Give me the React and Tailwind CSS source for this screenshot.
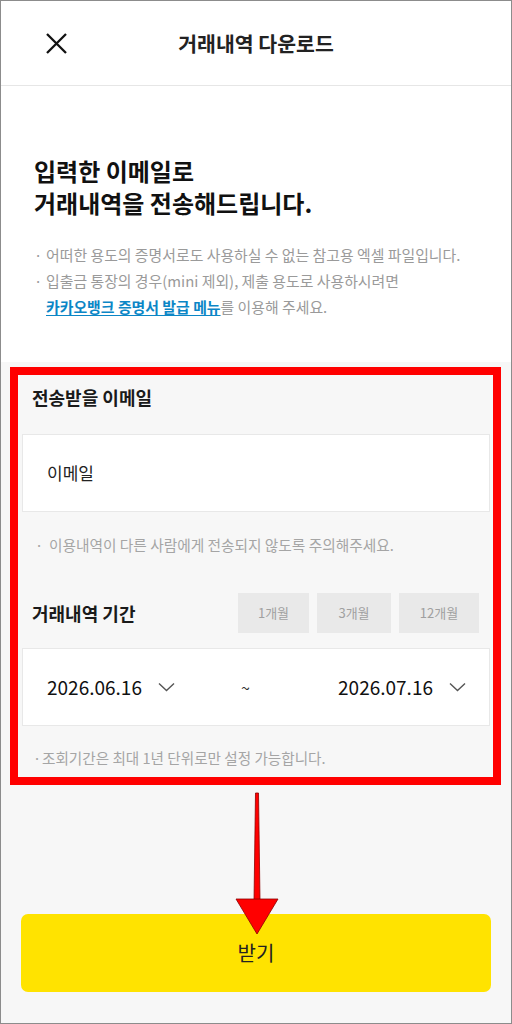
import React from "react";

const font = "font-['Noto_Sans_CJK_KR','Noto_Sans',sans-serif]";

function Chevron() {
  return (
    <svg width="17" height="10" viewBox="0 0 17 10" className="ml-[16px]">
      <path d="M1 1.5 L8.5 8.5 L16 1.5" fill="none" stroke="#555" strokeWidth="1.4" />
    </svg>
  );
}

export default function App() {
  const periods = [
    { label: "1개월", w: "w-[71px]" },
    { label: "3개월", w: "w-[74px]" },
    { label: "12개월", w: "w-[80px]" },
  ];

  return (
    <div className={`relative w-[512px] h-[1024px] border border-[#8c8c8c] bg-[#f7f7f7] flex flex-col overflow-hidden ${font}`}>
      {/* header */}
      <div className="h-[85px] shrink-0 bg-white border-b border-[#e6e6e6] grid grid-cols-[1fr_auto_1fr] items-center">
        <div className="pl-[45px]">
          <svg width="21" height="21" viewBox="0 0 21 21">
            <path d="M1 1 L20 20 M20 1 L1 20" stroke="#111" strokeWidth="2.3" />
          </svg>
        </div>
        <h1 className="text-[20.5px] font-bold text-[#222]">거래내역 다운로드</h1>
        <div />
      </div>

      {/* intro */}
      <div className="bg-white pt-[69px] pb-[42px] pl-[33px] pr-2">
        <h2 className="text-[24px] leading-[32px] font-bold text-[#111]">
          <span className="block">입력한 이메일로</span>
          <span className="block">거래내역을 전송해드립니다.</span>
        </h2>
        <ul className="mt-[23px] text-[14.9px] leading-[26px] text-[#9a9a9a]">
          <li className="flex">
            <span className="w-[12px] shrink-0">·</span>
            <span className="whitespace-nowrap">어떠한 용도의 증명서로도 사용하실 수 없는 참고용 엑셀 파일입니다.</span>
          </li>
          <li className="flex">
            <span className="w-[12px] shrink-0">·</span>
            <span>
              입출금 통장의 경우(mini 제외), 제출 용도로 사용하시려면
              <br />
              <a className="font-bold text-[#0b86c6] underline underline-offset-2">카카오뱅크 증명서 발급 메뉴</a>를 이용해 주세요.
            </span>
          </li>
        </ul>
      </div>

      {/* form (outlined) */}
      <div className="mt-[5px] ml-[9px] mr-[10px] border-[8px] border-[#ff0000] pt-[10px] pb-[9px] px-[4px]">
        <div className="px-[10px] text-[18px] leading-[24px] font-bold text-[#1a1a1a]">전송받을 이메일</div>
        <div className="mt-[25px] mr-[-1px] h-[78px] bg-white border border-[#e8e8e8] flex items-center pl-[24px] text-[17px] text-[#222]">
          이메일
        </div>
        <p className="mt-[23px] pl-[13px] flex text-[14.7px] leading-[20px] text-[#a5a5a5]">
          <span className="w-[14px] shrink-0">·</span>이용내역이 다른 사람에게 전송되지 않도록 주의해주세요.
        </p>

        <div className="mt-[38px] pl-[10px] pr-[10px] flex items-center justify-between">
          <span className="text-[18px] leading-[24px] font-bold text-[#1a1a1a]">거래내역 기간</span>
          <div className="flex gap-[8px]">
            {periods.map((p) => (
              <div key={p.label} className={`${p.w} h-[40px] bg-[#e9e9e9] flex items-center justify-center text-[13px] text-[#a0a0a0]`}>
                {p.label}
              </div>
            ))}
          </div>
        </div>

        <div className="mt-[15px] mr-[-1px] h-[78px] bg-white border border-[#e8e8e8] flex items-center pl-[24px] text-[19px] text-[#111]">
          <div className="flex items-center w-[194px]">
            2026.06.16
            <Chevron />
          </div>
          <span className="text-[16px] text-[#333]">~</span>
          <div className="ml-auto mr-[23px] flex items-center">
            2026.07.16
            <Chevron />
          </div>
        </div>

        <p className="mt-[22px] pl-[11px] flex text-[14.6px] leading-[20px] text-[#a5a5a5]">
          <span className="w-[9px] shrink-0">·</span>조회기간은 최대 1년 단위로만 설정 가능합니다.
        </p>
      </div>

      {/* submit */}
      <button className="mt-[129px] ml-[20px] mr-[20px] h-[78px] rounded-[7px] bg-[#ffe300] text-[20px] text-[#222]">
        받기
      </button>

      {/* annotation arrow */}
      <svg className="absolute left-[229px] top-[787px]" width="54" height="150" viewBox="0 0 54 150">
        <polygon points="25.5,5 28.5,5 30,113 24,113" fill="#ff0000" stroke="#8b0000" strokeWidth="0.8" />
        <polygon points="6,111 48,111 27,146" fill="#ff0000" stroke="#8b0000" strokeWidth="0.8" />
      </svg>
    </div>
  );
}
